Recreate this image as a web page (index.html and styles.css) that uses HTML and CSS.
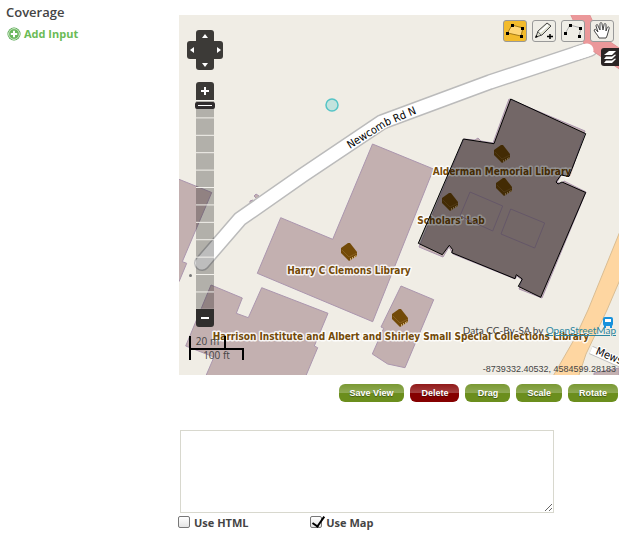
FILE: index.html
```html
<!DOCTYPE html>
<html lang="en">
<head>
<meta charset="utf-8">
<title>Coverage</title>
<link rel="stylesheet" href="styles.css">
</head>
<body>
<main class="field">
  <div class="field-head">
    <h1 class="field-title" id="coverage">Coverage</h1>
    <button class="add-input" type="button">
      <svg width="14" height="14" viewBox="0 0 14 14" aria-hidden="true">
        <circle cx="7" cy="7" r="6.5" fill="#3f9a3a"/>
        <circle cx="7" cy="7" r="5.4" fill="#69b75d" stroke="#d9efd3"/>
        <path d="M7 3.8v6.4M3.8 7h6.4" stroke="#fff" stroke-width="2"/>
      </svg>
      Add Input
    </button>
  </div>
  <div class="inputs">
    <div class="map">
      <svg class="map-canvas" viewBox="179 15 440 360" preserveAspectRatio="xMaxYMin slice" role="img" aria-labelledby="coverage">
        <defs>
          <g id="book">
            <path d="M-8-4-1-9 1-9 8 0V4L0 9-8 1z" fill="#734a08"/>
            <path d="M-7-2 0 5 8 1" fill="none" stroke="#8f6a2c" stroke-width=".7"/>
            <path d="M1.500 6v2M3.500 5v2M5.500 4v2M7 3v2" fill="none" stroke="#d9bd8a" stroke-width=".8"/>
          </g>
          <path id="newcomb" d="M350 149 387 126 425 110"/>
        </defs>
        <rect x="0" y="0" width="619" height="375" fill="#f0ede5"/>
        <g class="building">
          <path d="M170 176 179 179.3 211.7 192.5 182.3 261.7 186.7 263.3 179 281.7H170z"/>
          <path d="M211 285 242.3 298 236.3 313.3 248.3 317.7 261.7 287.7 328 313.3 314.3 346 317.7 347.7 305 378H205L214 357 185.7 346z"/>
          <path d="M372.5 144 433.5 169 372.7 321.7 257.3 273.3 280.7 217.7 332.7 239.3z"/>
          <path d="M401 286 433.7 299.7 405 367.7 387.7 364 372.3 354 383.7 328.3 381 327z"/>
          <path d="M509 99 585 131 570 176 562 174 557 182 561 184 564 181 586 192 542 298 519 289 522 280 517 276 515 279 453 254 449 247 443 257 419 247 464 139 475 140 478 138 481 141 493 143z"/>
          <path d="M594 373 619 368V380H594z"/>
          <path d="M254 196 256 194 259 196 257 199z M250 201 253 200 253 203 250 203z"/>
        </g>
        <circle cx="190.500" cy="275.500" r="1.500" fill="#777"/>
        <path d="M625 219 588 310 575 338 552 378H578L586 354 607 310 625 268z" fill="#fed6a1" stroke="#d9bd93"/>
        <path d="M591 350 625 365" stroke="#bbb" stroke-width="9"/>
        <path d="M591 350 625 365" stroke="#fff" stroke-width="7"/>
        <path d="M202 263 240 219 303 175 382 122 490 82 590 49" class="road-edge"/>
        <path d="M202 263 240 219 303 175 382 122 490 82 590 49" class="road"/>
        <path d="M577 8 592 40 626 63" fill="none" stroke="#d98b8e" stroke-width="18" stroke-linejoin="round"/>
        <path d="M577 8 592 40 626 63" fill="none" stroke="#eb989a" stroke-width="17" stroke-linejoin="round"/>
        <path d="M576 53.500 587 50" stroke="#fff" stroke-width="13" stroke-linecap="round"/>
        <g class="street">
          <text><textPath href="#newcomb">Newcomb Rd N</textPath></text>
          <text transform="translate(595 354) rotate(22)">Mews</text>
        </g>
        <g fill="#1691dc">
          <rect x="603" y="317" width="10" height="9" rx="2"/>
          <path d="M604 325h2v3h-2zM610 325h2v3h-2z"/>
          <path d="M605 319h6v3h-6z" fill="#fff"/>
        </g>
        <use href="#book" x="349" y="252"/>
        <use href="#book" x="400" y="318"/>
        <use href="#book" x="502" y="154"/>
        <use href="#book" x="504" y="187"/>
        <use href="#book" x="450" y="202"/>
        <g class="place">
          <text x="502" y="175">Alderman Memorial Library</text>
          <text x="451" y="224">Scholars' Lab</text>
          <text x="349" y="274">Harry C Clemons Library</text>
          <text x="401" y="340">Harrison Institute and Albert and Shirley Small Special Collections Library</text>
        </g>
        <path class="selected" d="M510.700 99 585.700 133.700 569 176.500 561 175 556 182 558 184 562 182 585.700 192.500 540.700 297.300 518.300 286.300 522.300 279 516.300 274.700 515 278.700 451.700 252.700 452.700 249.700 449.300 245.300 442.300 254.700 418.300 243.300 463.300 139 494 143.700z"/>
        <path class="court" d="M470 192 502.700 206 492.700 231 460 216z M510.700 209 544.700 223 534.700 248 501 234z"/>
        <circle cx="332" cy="105" r="6" fill="#c3e3dd" stroke="#55c4c6" stroke-width="1.500"/>
      </svg>

      <div class="navigator">
        <div class="pan">
          <button class="pan-up" type="button" aria-label="Pan up"><svg width="6" height="4" viewBox="0 0 6 4"><path d="M3 0 6 4H0z"/></svg></button>
          <button class="pan-left" type="button" aria-label="Pan left"><svg width="4" height="6" viewBox="0 0 4 6"><path d="M0 3 4 0V6z"/></svg></button>
          <span class="pan-center"></span>
          <button class="pan-right" type="button" aria-label="Pan right"><svg width="4" height="6" viewBox="0 0 4 6"><path d="M4 3 0 0V6z"/></svg></button>
          <button class="pan-down" type="button" aria-label="Pan down"><svg width="6" height="4" viewBox="0 0 6 4"><path d="M3 4 0 0H6z"/></svg></button>
        </div>
        <button class="zoom zoom-in" type="button" aria-label="Zoom in"><svg width="8" height="8" viewBox="0 0 8 8"><path d="M3 0h2v3h3v2H5v3H3V5H0V3h3z"/></svg></button>
        <input class="zoom-level" type="range" min="0" max="12" value="12" aria-label="Zoom level">
        <button class="zoom zoom-out" type="button" aria-label="Zoom out"><svg width="8" height="2" viewBox="0 0 8 2"><path d="M0 0h8v2H0z"/></svg></button>
      </div>

      <div class="tools">
        <button class="tool active" type="button" aria-label="Draw polygon">
          <svg width="22" height="20" viewBox="0 0 22 20"><path d="M3.500 12 8 4 19 7 17 15z" fill="#ffd778" stroke="#a47a18"/><path d="M2 11h3v3H2zM7 3h3v3H7zM17 6h3v3h-3zM16 14h3v3h-3z"/></svg>
        </button>
        <button class="tool" type="button" aria-label="Draw line">
          <svg width="22" height="20" viewBox="0 0 22 20"><path d="M3 16 5 10 14 2 18 5 9 14z" fill="#dedfd0" stroke="#444"/><path d="M7 11 15 4" fill="none" stroke="#fff" stroke-width="2"/><path d="M5 11 8 14" fill="none" stroke="#777"/><path d="M2 17 3 14 5 16z"/><path d="M17 13v5M14 15.500h6" stroke="#000" stroke-width="1.500"/></svg>
        </button>
        <button class="tool" type="button" aria-label="Draw point">
          <svg width="22" height="20" viewBox="0 0 22 20"><path d="M3.500 12 8 4 19 7 17 15" fill="none" stroke="#aaa"/><path d="M2 11h3v3H2zM7 3h3v3H7zM17 6h3v3h-3zM16 14h3v3h-3z"/></svg>
        </button>
        <button class="tool" type="button" aria-label="Navigate">
          <svg width="22" height="20" viewBox="0 0 22 20"><path d="M8 17C7 14 4 12 3 9c1-1 2-1 3 1l1 1L5 5c0-2 2-2 2 0l2 4V3c0-2 2-2 2 0l1 6 1-5c0-2 2-2 2 0v6l1-3c1-2 3-1 2 1l-2 7-1 2z" fill="#fff" stroke="#444"/></svg>
        </button>
      </div>

      <button class="layers" type="button" aria-label="Layers">
        <svg width="14" height="14" viewBox="0 0 14 14"><path d="M1 5 6 1 13 1 9 5zM1 9 3 6.500H9L12 4.500 13 5 9 9zM1 13 3 10.500H9L12 8.500 13 9 9 13z"/></svg>
      </button>

      <div class="scale">
        <div class="scale-metric">20 m</div>
        <div class="scale-imperial">100 ft</div>
      </div>
      <div class="attribution">Data CC-By-SA by <a href="#">OpenStreetMap</a></div>
      <div class="position">-8739332.40532, 4584599.28183</div>
    </div>

    <div class="actions">
      <button class="action" type="button">Save View</button>
      <button class="action danger" type="button">Delete</button>
      <button class="action" type="button">Drag</button>
      <button class="action" type="button">Scale</button>
      <button class="action" type="button">Rotate</button>
    </div>

    <textarea class="notes" aria-label="Coverage text"></textarea>
    <div class="options">
      <label class="option"><input type="checkbox">Use HTML</label>
      <label class="option"><input type="checkbox" checked>Use Map</label>
    </div>
  </div>
</main>
</body>
</html>
```
FILE: styles.css
```css
* { box-sizing: border-box; }
body {
  margin: 0;
  background: #fff;
  color: #444;
  font-family: "Open Sans", "Noto Sans", sans-serif;
}
button { margin: 0; padding: 0; border: 0; font: inherit; cursor: pointer; }
svg { display: block; }

.field {
  display: grid;
  grid-template-columns: 173px minmax(0, 1fr);
  padding: 3px 3px 0 6px;
}
.field-title { margin: 0; font-size: 13px; line-height: 18px; font-weight: 600; }
.add-input {
  display: flex;
  align-items: center;
  gap: 3px;
  margin-top: 4px;
  padding-left: 1px;
  background: none;
  color: #6abb55;
  font-size: 11px;
  line-height: 18px;
  font-weight: 700;
}
.inputs { padding-top: 12px; }

/* Map */
.map { position: relative; height: 360px; overflow: hidden; background: #f0ede5; }
.map-canvas { width: 100%; height: 100%; }
.building { fill: #c3b0b0; stroke: #ab96ae; }
.road-edge, .road { fill: none; stroke-linecap: round; stroke-linejoin: round; }
.road-edge { stroke: #bbb; stroke-width: 16px; }
.road { stroke: #fff; stroke-width: 13px; }
.street text {
  font: 11px "DejaVu Sans Condensed", "DejaVu Sans", sans-serif;
  fill: #000;
  stroke: #fff;
  stroke-width: 2px;
  paint-order: stroke;
}
.place text {
  font: bold 10px "DejaVu Sans Condensed", "DejaVu Sans", sans-serif;
  fill: #734a08;
  stroke: #fff;
  stroke-opacity: .85;
  stroke-width: 3px;
  stroke-linejoin: round;
  paint-order: stroke;
  text-anchor: middle;
}
.selected { fill: #000; fill-opacity: .41; stroke: #000; stroke-width: 1px; }
.court { fill: none; stroke: #655768; }

/* Pan and zoom */
.navigator {
  position: absolute;
  top: 15px;
  left: 8px;
  display: flex;
  flex-direction: column;
  align-items: center;
}
.navigator svg { fill: #fff; }
.pan {
  display: grid;
  grid-template: 11px 18px 11px / 9px 18px 9px;
  margin-bottom: 12px;
}
.pan button, .zoom { display: flex; align-items: center; justify-content: center; background: #3c3a37; }
.pan-up { grid-area: 1 / 2; border-radius: 3px 3px 0 0; }
.pan-left { grid-area: 2 / 1; border-radius: 3px 0 0 3px; }
.pan-center { grid-area: 2 / 2; background: #3c3a37; }
.pan-right { grid-area: 2 / 3; border-radius: 0 3px 3px 0; }
.pan-down { grid-area: 3 / 2; border-radius: 0 0 3px 3px; }
.zoom { width: 18px; height: 18px; }
.zoom-in { border-radius: 3px 3px 0 0; }
.zoom-out { border-radius: 0 0 3px 3px; background: #302e2d; }
.zoom-level {
  appearance: none;
  writing-mode: vertical-lr;
  direction: rtl;
  width: 18px;
  height: 209px;
  margin: 0;
  padding: 2px 0 0;
  background: linear-gradient(#f5f3ee 1px, rgba(0, 0, 0, .26) 1px) 0 0 / 100% calc(100% / 12);
}
.zoom-level::-webkit-slider-thumb {
  appearance: none;
  width: 20px;
  height: 7px;
  margin-left: -1px;
  border: 3px solid #302c2d;
  border-radius: 2px;
  background: #fff;
}

/* Drawing tools */
.tools { position: absolute; top: 5px; right: 5px; display: flex; gap: 5px; }
.tool {
  display: flex;
  align-items: center;
  justify-content: center;
  width: 24px;
  height: 22px;
  border: 1px solid #999;
  border-radius: 3px;
  background: #efede6;
}
.tool.active { background: #f3bb2c; }
.layers {
  position: absolute;
  top: 33px;
  right: 0;
  display: flex;
  align-items: center;
  justify-content: center;
  width: 18px;
  height: 18px;
  border-radius: 3px 0 0 3px;
  background: #2b2525;
}
.layers svg { fill: #fff; }

/* Map read-outs */
.scale { position: absolute; top: 321px; left: 10px; font-size: 10px; line-height: 11px; text-align: center; }
.scale-metric { width: 37px; height: 12px; border: solid #000; border-width: 0 2px; }
.scale-imperial { width: 55px; height: 12px; border: solid #000; border-width: 2px 2px 0; }
.attribution { position: absolute; top: 308px; right: 3px; font: 10px/14px Lato, "Open Sans", sans-serif; }
.attribution a { color: #2a86a0; }
.position { position: absolute; right: 3px; bottom: 0; font: 9px/12px "Liberation Sans", sans-serif; }

/* Actions */
.actions { display: flex; justify-content: flex-end; gap: 6px; margin-top: 9px; padding-right: 1px; }
.action {
  height: 18px;
  min-width: 45px;
  padding: 0 11px;
  border-radius: 6px;
  background: linear-gradient(rgba(255, 255, 255, .1), rgba(255, 255, 255, .25) 50%, transparent 50%) #6b8e1d;
  color: #fff;
  font: bold 9px/18px "Liberation Sans", sans-serif;
  text-shadow: 0 1px 1px rgba(0, 0, 0, .4);
}
.action.danger { background-color: #850000; }

/* Text field */
.notes {
  display: block;
  width: 85%;
  height: 83px;
  margin: 28px 0 0 1px;
  border: 1px solid #d8d8ce;
  background: #fff;
  resize: both;
}
.options { display: grid; grid-template-columns: 30% 30%; margin-left: -1px; }
.option { display: flex; align-items: center; gap: 4px; font-size: 11px; line-height: 20px; font-weight: 700; }
.option input {
  appearance: none;
  position: relative;
  width: 12px;
  height: 12px;
  margin: 0 0 2px;
  border: 1px solid #777;
  border-radius: 2px;
  background: linear-gradient(#fff, #e4e4e4);
}
.option input:checked::after {
  content: "";
  position: absolute;
  left: 4px;
  top: -3px;
  width: 5px;
  height: 11px;
  border: solid #000;
  border-width: 0 2px 2px 0;
  transform: rotate(35deg);
}
```
